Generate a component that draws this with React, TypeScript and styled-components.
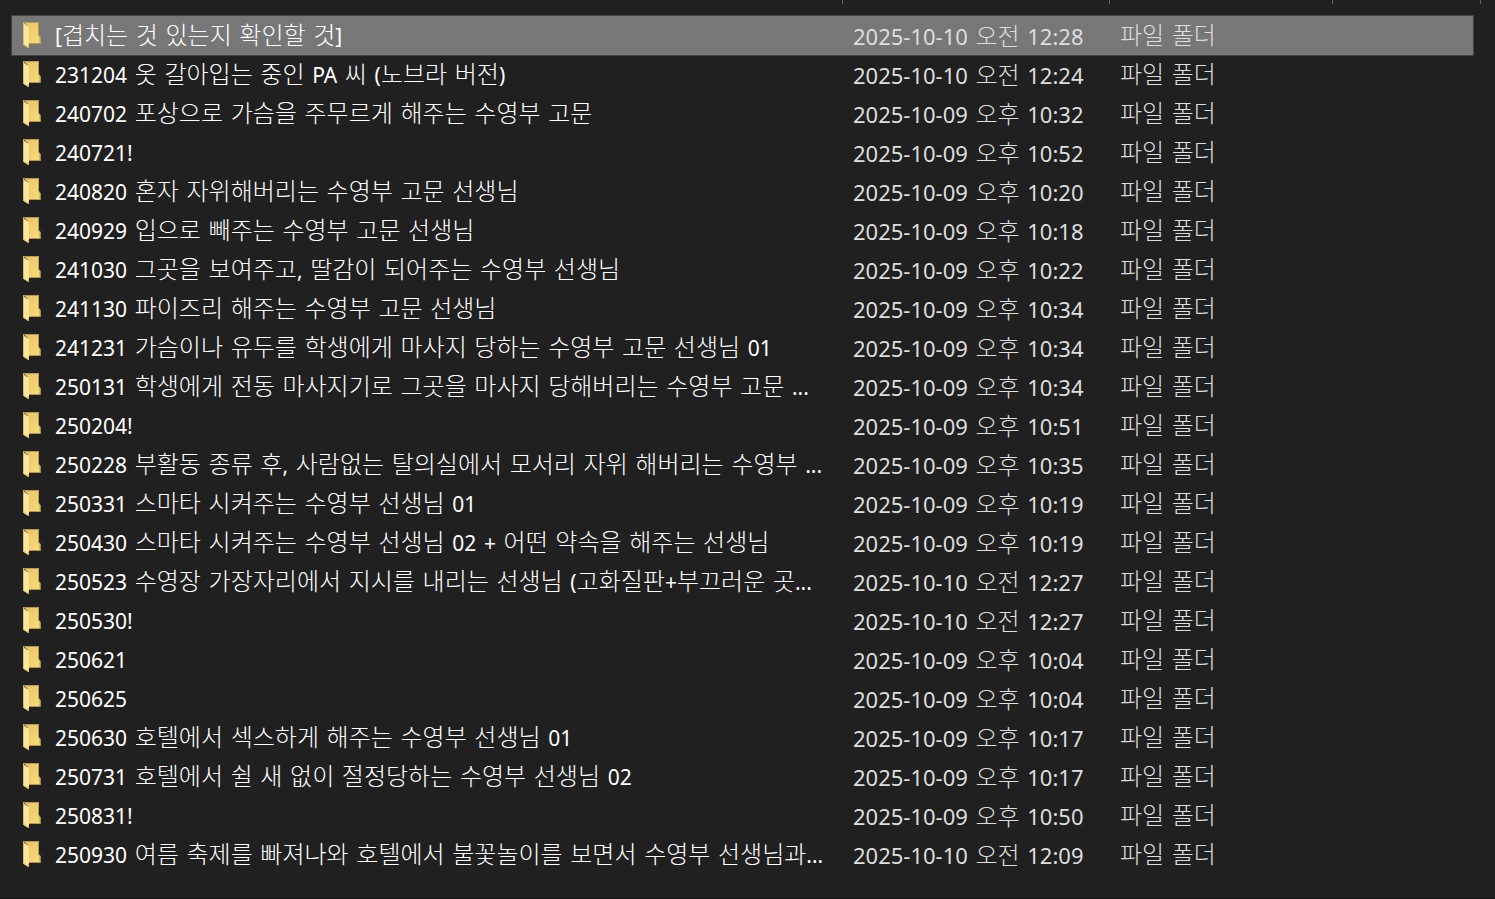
import React from "react";
import styled, { createGlobalStyle } from "styled-components";

const GlobalStyle = createGlobalStyle`
  * { box-sizing: border-box; }
  body { margin: 0; background: #202020; color: #fff; }
`;

const Pane = styled.main`
  min-height: 100vh;
  padding: 0 22px 0 12px;
  background: #202020;
  border-bottom: 2px solid #191919;
  overflow: hidden;
`;

const HeaderEdge = styled.div`
  display: flex;
  height: 16px;
  margin-right: -22px;
`;

const HeaderCell = styled.span<{ $width: number }>`
  flex: 0 0 ${(p) => p.$width}px;
  height: 4px;
  border-right: 1px solid #636363;
`;

const FileTable = styled.table`
  width: 100%;
  table-layout: fixed;
  border-collapse: collapse;
  font-family: "DejaVu Sans", "Noto Sans CJK KR", sans-serif;
  font-size: 24px;
  font-weight: 300;
  line-height: 35px;
`;

const Column = styled.col<{ $width?: number }>`
  width: ${(p) => (p.$width ? `${p.$width}px` : "auto")};
`;

const FileRow = styled.tr<{ $selected?: boolean }>`
  height: 39px;
  background: ${(p) => (p.$selected ? "#777777" : "transparent")};
  outline: ${(p) => (p.$selected ? "1px solid #434343" : "none")};
`;

const Cell = styled.td`
  height: 39px;
  padding: 2px 0 0 10px;
  color: #dedede;
  white-space: nowrap;
`;

const NameCell = styled(Cell)`
  color: #fff;
`;

const NameLayout = styled.div`
  display: flex;
  align-items: center;
  gap: 14px;
  height: 37px;
`;

const Name = styled.span`
  overflow: hidden;
`;

const Latin = styled.span<{ $size: number }>`
  font-family: "Noto Sans", sans-serif;
  font-size: ${(p) => p.$size}px;
  font-weight: 400;
`;

const FolderSvg = styled.svg`
  flex: none;
  display: block;
  margin: 0 0 4px 1px;
`;

function FolderIcon() {
  return (
    <FolderSvg width="18" height="26" viewBox="0 0 18 26" aria-hidden="true">
      <defs>
        <linearGradient id="folderBack" x1="0" y1="0" x2="1" y2="1">
          <stop offset="0" stopColor="#e6c163" />
          <stop offset="1" stopColor="#fbdc7c" />
        </linearGradient>
      </defs>
      <path d="M0 0H16V13L17.500 15V22H5V4Z" fill="url(#folderBack)" />
      <path d="M0 .5H15.500V13.500L17 15.500V21.500H6" fill="none" stroke="#b39a4d" />
      <path d="M0 1L6 5V26L4.500 25.500L0 22.500Z" fill="#ffe59c" />
      <path d="M.5 .5V22.500L5.500 25.500V23" fill="none" stroke="#d6bb6c" />
    </FolderSvg>
  );
}

/* Hangul and the spaces between words use the Korean face; the rest is Latin. */
function MixedText({ text, latinSize }: { text: string; latinSize: number }) {
  const runs = text.split(/([^\s\uac00-\ud7a3]+)/).filter(Boolean);
  return (
    <>
      {runs.map((run, i) =>
        /^[\s\uac00-\ud7a3]/.test(run) ? (
          <React.Fragment key={i}>{run}</React.Fragment>
        ) : (
          <Latin key={i} $size={latinSize}>{run}</Latin>
        )
      )}
    </>
  );
}

const files: [string, string][] = [
  ["[겹치는 것 있는지 확인할 것]", "2025-10-10 오전 12:28"],
  ["231204 옷 갈아입는 중인 PA 씨 (노브라 버전)", "2025-10-10 오전 12:24"],
  ["240702 포상으로 가슴을 주무르게 해주는 수영부 고문", "2025-10-09 오후 10:32"],
  ["240721!", "2025-10-09 오후 10:52"],
  ["240820 혼자 자위해버리는 수영부 고문 선생님", "2025-10-09 오후 10:20"],
  ["240929 입으로 빼주는 수영부 고문 선생님", "2025-10-09 오후 10:18"],
  ["241030 그곳을 보여주고, 딸감이 되어주는 수영부 선생님", "2025-10-09 오후 10:22"],
  ["241130 파이즈리 해주는 수영부 고문 선생님", "2025-10-09 오후 10:34"],
  ["241231 가슴이나 유두를 학생에게 마사지 당하는 수영부 고문 선생님 01", "2025-10-09 오후 10:34"],
  ["250131 학생에게 전동 마사지기로 그곳을 마사지 당해버리는 수영부 고문 ...", "2025-10-09 오후 10:34"],
  ["250204!", "2025-10-09 오후 10:51"],
  ["250228 부활동 종류 후, 사람없는 탈의실에서 모서리 자위 해버리는 수영부 ...", "2025-10-09 오후 10:35"],
  ["250331 스마타 시켜주는 수영부 선생님 01", "2025-10-09 오후 10:19"],
  ["250430 스마타 시켜주는 수영부 선생님 02 + 어떤 약속을 해주는 선생님", "2025-10-09 오후 10:19"],
  ["250523 수영장 가장자리에서 지시를 내리는 선생님 (고화질판+부끄러운 곳...", "2025-10-10 오전 12:27"],
  ["250530!", "2025-10-10 오전 12:27"],
  ["250621", "2025-10-09 오후 10:04"],
  ["250625", "2025-10-09 오후 10:04"],
  ["250630 호텔에서 섹스하게 해주는 수영부 선생님 01", "2025-10-09 오후 10:17"],
  ["250731 호텔에서 쉴 새 없이 절정당하는 수영부 선생님 02", "2025-10-09 오후 10:17"],
  ["250831!", "2025-10-09 오후 10:50"],
  ["250930 여름 축제를 빠져나와 호텔에서 불꽃놀이를 보면서 수영부 선생님과...", "2025-10-10 오전 12:09"],
];

export default function App() {
  return (
    <Pane>
      <GlobalStyle />
      <HeaderEdge aria-hidden="true">
        <HeaderCell $width={831} />
        <HeaderCell $width={267} />
        <HeaderCell $width={223} />
        <HeaderCell $width={148} />
      </HeaderEdge>
      <FileTable>
        <colgroup>
          <Column $width={831} />
          <Column $width={267} />
          <Column />
        </colgroup>
        <tbody>
          {files.map(([name, modified], i) => (
            <FileRow key={name} $selected={i === 0} aria-selected={i === 0}>
              <NameCell>
                <NameLayout>
                  <FolderIcon />
                  <Name><MixedText text={name} latinSize={21} /></Name>
                </NameLayout>
              </NameCell>
              <Cell><MixedText text={modified} latinSize={22} /></Cell>
              <Cell>파일 폴더</Cell>
            </FileRow>
          ))}
        </tbody>
      </FileTable>
    </Pane>
  );
}
